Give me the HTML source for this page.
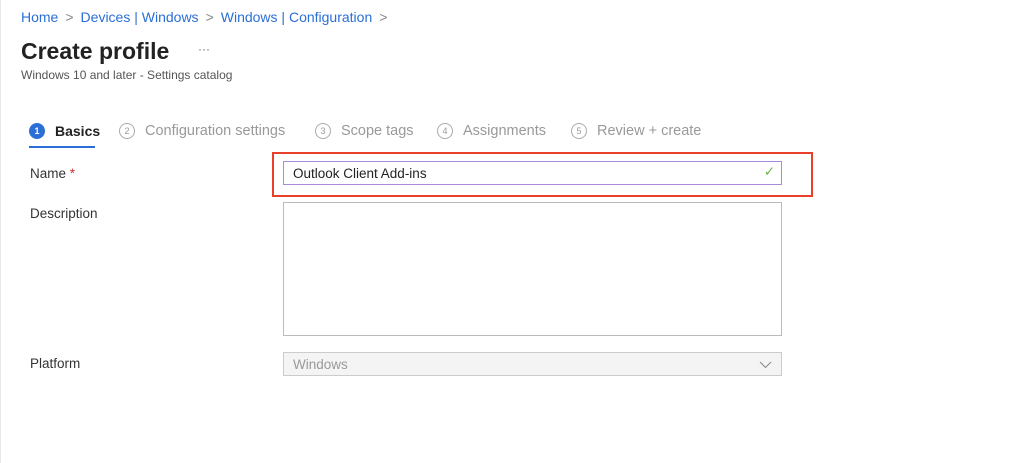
<!DOCTYPE html>
<html><head><style>
body{margin:0;width:1024px;height:463px;background:#fff;font-family:"Liberation Sans",sans-serif;position:relative;overflow:hidden}
.a{position:absolute;white-space:nowrap}
.bc{top:9px;left:21px;font-size:14px;color:#2b6fd6}
.bc span{color:#888;margin:0 7px}
h1{position:absolute;margin:0;top:38px;left:21px;font-size:23px;font-weight:bold;color:#222}
.sub{top:68px;left:21px;font-size:12px;color:#555}
.tab{top:123px;font-size:14.5px;color:#999;display:flex;align-items:center}
.c{width:16px;height:16px;border:1px solid #aaa;border-radius:50%;font-size:9px;display:inline-flex;align-items:center;justify-content:center;margin-right:10px;box-sizing:border-box;color:#999}
.lbl{left:30px;font-size:13.5px;color:#333}
.box{position:absolute;left:283px;width:499px;border:1px solid #bbb;box-sizing:border-box}
</style></head><body>
<div style="position:absolute;left:0;top:0;width:1px;height:463px;background:#e8e8e8"></div>
<div class="a bc">Home<span>&gt;</span>Devices | Windows<span>&gt;</span>Windows | Configuration<span>&gt;</span></div>
<h1>Create profile</h1>
<div class="a" style="top:42px;left:198px;font-size:12px;color:#666">···</div>
<div class="a sub">Windows 10 and later - Settings catalog</div>
<div class="a tab" style="left:29px;color:#222;font-weight:bold;font-size:14px"><span class="c" style="background:#2b6fd6;border-color:#2b6fd6;color:#fff">1</span>Basics</div>
<div class="a" style="left:29px;top:146px;width:66px;height:2px;background:#2b6fd6"></div>
<div class="a tab" style="left:119px"><span class="c">2</span>Configuration settings</div>
<div class="a tab" style="left:315px"><span class="c">3</span>Scope tags</div>
<div class="a tab" style="left:437px"><span class="c">4</span>Assignments</div>
<div class="a tab" style="left:571px"><span class="c">5</span>Review + create</div>
<div class="a lbl" style="top:166px">Name <span style="color:#c33">*</span></div>
<div class="a lbl" style="top:206px">Description</div>
<div class="a lbl" style="top:356px">Platform</div>
<div class="a" style="left:272px;top:152px;width:541px;height:45px;border:2px solid #e8402a;box-sizing:border-box"></div>
<div class="box" style="top:161px;height:24px;border-color:#a98ad6;font-size:13.5px;color:#222;padding:4px 9px">Outlook Client Add-ins<span style="position:absolute;right:6px;top:2px;color:#6bb54a">✓</span></div>
<div class="box" style="top:202px;height:134px"></div>
<div class="box" style="top:352px;height:24px;background:#f4f4f4;border-color:#ccc;font-size:13.5px;color:#999;padding:4px 9px">Windows
<svg style="position:absolute;right:9px;top:8px" width="13" height="8"><path d="M1 1L6.5 6.5L12 1" stroke="#888" fill="none"/></svg></div>
</body></html>
